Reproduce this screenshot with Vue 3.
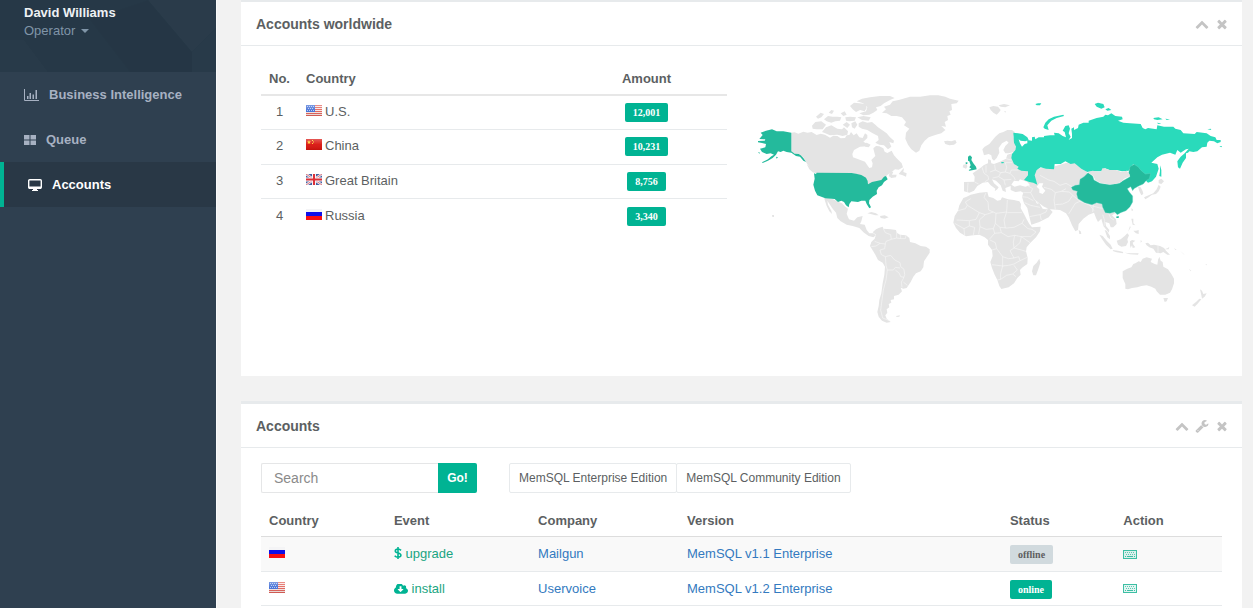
<script setup>
import { ref } from 'vue'

const query = ref('')

const totals = [
  { no: 1, flag: 'us', country: 'U.S.', amount: '12,001' },
  { no: 2, flag: 'cn', country: 'China', amount: '10,231' },
  { no: 3, flag: 'gb', country: 'Great Britain', amount: '8,756' },
  { no: 4, flag: 'ru', country: 'Russia', amount: '3,340' },
]

const accounts = [
  { flag: 'ru', event: 'upgrade', company: 'Mailgun', version: 'MemSQL v1.1 Enterprise', status: 'offline' },
  { flag: 'us', event: 'install', company: 'Uservoice', version: 'MemSQL v1.2 Enterprise', status: 'online' },
]
</script>

<template>
  <svg class="defs" aria-hidden="true">
    <defs>
      <linearGradient id="shine" x1="0" y1="0" x2="0" y2="1">
        <stop offset="0" stop-color="#fff" stop-opacity=".3" />
        <stop offset=".5" stop-color="#fff" stop-opacity=".05" />
        <stop offset="1" stop-color="#000" stop-opacity=".1" />
      </linearGradient>
      <symbol id="flag-us" viewBox="0 0 16 11">
        <path fill="#f8e6e4" d="M0 0h16v11H0z" />
        <path stroke="#e2625a" d="M0 .5h16M0 2.5h16M0 4.5h16M0 6.500h16M0 8.500h16M0 10.500h16" />
        <path fill="#4470d6" d="M0 0h9v7H0z" />
        <path stroke="#b9c9f2" stroke-dasharray="1 1" d="M1 1.500h7M2 3.500h6M1 5.500h7" />
        <path fill="url(#shine)" d="M0 0h16v11H0z" />
      </symbol>
      <symbol id="flag-cn" viewBox="0 0 16 11">
        <path fill="#d9130d" d="M0 0h16v11H0z" />
        <path fill="#ffd52e" d="M3 1l.6 1.400 1.400.1-1.100 1 .4 1.500L3 4.200 1.700 5l.4-1.500L1 2.500l1.400-.1zM6 1h1v1H6zM7 2.500h1v1H7zM6 4h1v1H6z" />
        <path fill="url(#shine)" d="M0 0h16v11H0z" />
      </symbol>
      <symbol id="flag-gb" viewBox="0 0 16 11">
        <path fill="#45609f" d="M0 0h16v11H0z" />
        <path stroke="#eceff8" stroke-width="2.400" d="M0 0l16 11M16 0L0 11" />
        <path stroke="#d9565c" stroke-width=".8" d="M0 0l16 11M16 0L0 11" />
        <path stroke="#f6f4f8" stroke-width="4" d="M8 0v11M0 5.500h16" />
        <path stroke="#dc3038" stroke-width="2" d="M8 0v11M0 5.500h16" />
      </symbol>
      <symbol id="flag-ru" viewBox="0 0 16 11">
        <path fill="#f4f4f6" d="M0 0h16v4H0z" />
        <path fill="#1010e8" d="M0 3h16v4H0z" />
        <path fill="#fa1010" d="M0 7h16v4H0z" />
      </symbol>
      <symbol id="i-up" viewBox="0 0 1792 1792">
        <path fill="currentColor" d="M1683 1331l-166 165q-19 19-45 19t-45-19l-531-531-531 531q-19 19-45 19t-45-19l-166-165q-19-19-19-45.500t19-45.500l742-741q19-19 45-19t45 19l742 741q19 19 19 45.500t-19 45.500z" />
      </symbol>
      <symbol id="i-wrench" viewBox="0 0 1792 1792">
        <path fill="currentColor" d="M448 1472q0-26-19-45t-45-19-45 19-19 45 19 45 45 19 45-19 19-45zm644-420l-682 682q-37 37-90 37-52 0-91-37l-106-108q-38-36-38-90 0-53 38-91l681-681q39 98 114.500 173.500t173.500 114.500zm634-435q0 39-23 106-47 134-164.500 217.500t-258.500 83.500q-185 0-316.500-131.500t-131.500-316.500 131.500-316.500 316.500-131.500q58 0 121.500 16.500t107.500 46.500q16 11 16 28t-16 28l-293 169v224l193 107q5-3 79-48.500t135.500-81 70.500-35.500q15 0 23.500 10t8.500 25z" />
      </symbol>
      <symbol id="i-times" viewBox="0 0 1792 1792">
        <path fill="currentColor" d="M1490 1322q0 40-28 68l-136 136q-28 28-68 28t-68-28l-294-294-294 294q-28 28-68 28t-68-28l-136-136q-28-28-28-68t28-68l294-294-294-294q-28-28-28-68t28-68l136-136q28-28 68-28t68 28l294 294 294-294q28-28 68-28t68 28l136 136q28 28 28 68t-28 68l-294 294 294 294q28 28 28 68z" />
      </symbol>
    </defs>
  </svg>

  <div class="page">
    <aside class="sidebar">
      <header class="profile">
        <svg class="facets" viewBox="0 0 216 72" preserveAspectRatio="none" aria-hidden="true">
          <path fill="#fff" opacity=".02" d="M148 0l44 52L216 28V0z" />
          <path fill="#fff" opacity=".012" d="M192 52l24-24v44h-24z" />
          <path fill="#000" opacity=".02" d="M148 0l44 52v20h-62L90 20z" />
          <path fill="#fff" opacity=".012" d="M0 40l24 0 24 32H0z" />
        </svg>
        <strong class="name">David Williams</strong>
        <button class="role" type="button">Operator <span class="caret"></span></button>
      </header>
      <nav class="menu">
        <a href="#bi">
          <svg width="15" height="12" viewBox="0 0 15 12" aria-hidden="true">
            <path fill="none" stroke="currentColor" d="M.5 0v11.500H15" />
            <path fill="currentColor" d="M3 7h1.500v3H3zM5.500 4H7v6H5.500zM8.500 5.500H10V10H8.500zM11.500 1H13v9h-1.500z" />
          </svg>
          Business Intelligence
        </a>
        <a href="#queue">
          <svg width="12" height="12" viewBox="0 0 12 12" aria-hidden="true">
            <path fill="currentColor" d="M0 1h5.500v4.500H0zM6.500 1H12v4.500H6.500zM0 6.500h5.500V11H0zM6.500 6.500H12V11H6.500z" />
          </svg>
          Queue
        </a>
        <a href="#accounts" class="active" aria-current="page">
          <svg width="14" height="12" viewBox="0 0 14 12" aria-hidden="true">
            <rect x=".7" y=".7" width="12.600" height="8.600" rx="1" fill="none" stroke="currentColor" stroke-width="1.400" />
            <path fill="currentColor" d="M1 7.500h12V10H9v1h1v1H4v-1h1v-1H1z" />
          </svg>
          Accounts
        </a>
      </nav>
    </aside>

    <main class="main">
      <section class="panel first">
        <header class="panel-head">
          <h2>Accounts worldwide</h2>
          <div class="tools">
            <button type="button" aria-label="Collapse"><svg><use href="#i-up" /></svg></button>
            <button type="button" aria-label="Close"><svg><use href="#i-times" /></svg></button>
          </div>
        </header>
        <div class="world">
          <div>
            <table class="totals">
              <colgroup><col class="t-no" /><col /><col class="t-amount" /></colgroup>
              <thead>
                <tr><th class="mid">No.</th><th>Country</th><th class="mid">Amount</th></tr>
              </thead>
              <tbody>
                <tr v-for="row in totals" :key="row.no">
                  <td class="mid">{{ row.no }}</td>
                  <td><svg class="flag" role="img" :aria-label="row.flag"><use :href="'#flag-' + row.flag" /></svg>{{ row.country }}</td>
                  <td class="mid"><span class="badge green">{{ row.amount }}</span></td>
                </tr>
              </tbody>
            </table>
          </div>

          <svg class="map" viewBox="0 0 1401 720" role="img" aria-label="World map of accounts">
            <!-- North America -->
            <g class="land" transform="translate(-21 -30)">
              <path d="M124 158L134 157 145 161 160 155 172 158 185 156 200 165 212 161 225 164 240 173 250 167 262 168 272 175 285 174 290 166 298 165 303 156 311 166 320 160 328 172 338 174 345 160 352 165 352 174 340 185 354 193 352 199 330 200 312 210 307 222 309 232 325 238 345 245 352 256 358 264 366 262 368 250 364 240 376 228 372 214 370 205 378 198 388 199 400 205 404 215 412 219 425 212 432 226 440 235 455 250 459 262 446 269 435 268 425 276 412 285 400 298 385 308 355 312 350 297 335 287 315 282 305 279 195 279 185 270 178 260 170 250 160 232 150 226 136 222 124 215z" />
              <path d="M416 288L420 276 430 275 426 284 440 284 438 292 424 294zM446 282L456 270 462 264 460 276 470 280 468 290 458 286z" />
              <path d="M186 137L196 126 214 124 228 134 218 148 200 148 188 146zM216 156L228 142 244 136 262 146 276 148 282 142 294 154 292 164 278 168 262 164 240 166 226 160zM198 110L212 98 222 102 214 112 204 116zM222 118L234 108 248 110 262 110 274 112 270 122 256 124 244 128 230 124zM236 98L244 90 252 92 246 102zM272 100L284 94 290 104 280 108zM286 112L300 110 318 112 314 122 298 124 288 122zM278 134L290 126 300 134 292 144zM304 130L316 124 322 134 314 146 306 142zM322 112L340 108 362 112 356 122 336 120zM300 78L312 68 328 70 346 72 350 84 344 94 330 90 318 96 308 88zM320 64L336 56 360 52 390 48 420 48 434 54 420 60 402 70 392 78 378 82 382 90 370 98 358 104 340 106 328 100 348 94 352 82 340 70zM326 130L338 124 352 128 366 126 376 134 384 142 396 150 410 160 420 172 432 182 430 190 418 186 424 200 414 208 402 196 388 194 376 188 386 180 384 168 368 160 352 150 336 146 326 140zM340 192L350 188 362 194 356 202 346 200zM170 252L182 262 194 276 190 278 178 268z" />
              <path d="M396 98L408 88 402 80 420 74 428 64 446 60 480 50 510 50 540 46 565 46 586 50 600 56 626 62 620 70 604 72 606 90 598 94 602 104 592 108 594 120 584 126 588 140 574 138 586 150 574 160 558 164 536 172 524 182 514 196 508 212 498 218 484 208 474 194 466 176 468 158 478 146 462 136 468 126 456 112 440 108 424 108 410 100z" />
              <path d="M222 353L236 354 250 358 264 365 276 370 286 380 294 386 290 402 297 418 312 422 322 412 338 408 334 424 330 432 344 434 350 450 358 460 370 460 378 466 370 472 356 468 342 458 328 444 308 438 290 434 272 424 262 414 258 398 248 386 240 374 232 362 234 374 244 392 246 402 238 394 230 378 226 366z" />
              <path d="M352 400L364 396 378 400 386 406 376 406 362 402zM390 408L404 406 416 412 404 416 392 414z" />
              <path d="M66 405L72 405 72 411 67 411z" />
            </g>
            <g class="dark" transform="translate(-21 -30)">
              <path d="M28 177L38 165 32 158 48 152 66 148 80 154 100 154 124 158 124 214 134 221 146 222 152 226 160 234 168 246 160 242 150 230 138 228 124 218 110 216 100 212 92 216 84 214 78 224 68 234 54 242 38 249 36 247 54 238 64 229 72 224 62 220 50 222 36 216 30 206 46 202 48 192 36 189 24 187 24 183 44 182 46 178z" />
              <path d="M192 280L198 282 200 278 305 279 318 281 334 285 348 293 353 303 354 313 366 306 380 303 394 300 402 290 408 288 413 298 402 306 396 316 386 322 380 332 381 342 368 350 358 360 357 370 363 382 358 385 350 372 346 362 334 362 324 366 304 364 298 372 296 382 288 376 282 366 274 362 264 366 254 357 226 355 214 350 202 346 195 332 190 314 194 296z" />
              <path d="M24 216L30 218 28 221zM78 230L84 232 80 236z" />
            </g>
            <!-- South America -->
            <g class="land" transform="translate(279 330)">
              <path d="M68 97L78 88 86 84 98 80 100 86 122 88 138 90 140 98 150 104 168 106 178 114 180 126 196 130 212 138 228 140 239 148 239 158 230 172 222 184 220 202 212 214 198 220 190 230 182 246 170 264 160 266 152 263 156 274 146 284 132 288 132 298 122 300 124 308 116 312 118 322 110 328 112 338 106 346 110 356 122 366 110 368 96 362 86 350 82 336 86 318 88 300 94 280 98 250 103 224 105 200 98 188 84 180 76 164 66 148 60 138 64 126 74 116 78 104z" />
              <path d="M138 348L150 346 148 350 140 351zM30 78L36 74 44 84 36 84z" />
              <path class="seam" d="M100 86L106 98 122 104 124 118 108 124 106 132 90 130 74 124M106 132L104 146 90 150 94 164 106 170 122 166 134 180 150 188 152 200 162 208 164 224 160 236 154 246 156 262M106 170L108 196 112 210 130 210 136 202 150 204M136 210L148 220 152 230 162 232M112 210L108 240 100 270 96 300 92 330 98 354 118 362M124 118L140 114 140 98M140 114L152 116 152 104M152 116L166 116 168 106M64 140L78 138 90 130M160 246L172 256" />
            </g>
            <!-- Atlantic islands and Scandinavia -->
            <g class="land" transform="translate(549 0)">
              <path d="M12 154L22 152 34 154 46 150 50 158 42 164 28 166 16 162zM148 52L160 48 174 50 182 60 178 66 170 74 160 68 152 60zM176 46L192 42 210 46 196 52 182 50zM192 64L198 64 196 68zM68 232L70 224 80 222 82 230 78 236z" />
              <path d="M127 178L134 170 148 162 158 150 166 140 178 130 190 126 202 120 216 120 224 126 220 140 226 160 228 174 222 186 206 190 196 190 190 180 196 168 206 158 200 152 186 160 176 174 178 188 170 204 162 212 156 206 154 196 146 192 132 196z" />
            </g>
            <!-- Eurasian mainland -->
            <g transform="translate(549 0)">
              <path class="land" d="M216 190L202 194 198 206 178 216 162 222 154 220 152 210 144 208 144 220 132 225 118 236 98 250 104 260 103 275 72 276 72 304 88 308 102 302 112 288 128 278 144 276 152 286 166 296 164 304 172 298 176 292 162 280 156 268 168 272 182 286 188 302 198 306 196 294 212 288 212 300 226 306 242 304 250 308 246 320 252 340 262 354 268 380 274 404 298 396 326 382 338 366 326 354 316 358 308 356 298 340 312 350 330 358 360 360 378 370 386 382 396 406 406 424 414 420 416 402 430 386 446 374 462 368 468 384 474 396 484 386 490 408 500 420 506 428 508 420 498 408 496 396 508 400 512 412 520 412 530 402 528 388 516 376 528 368 480 320 440 245 400 212 340 230 290 236 230 200z" />
              <path class="sea" d="M214 284L222 272 236 274 240 268 252 272 262 276 270 286 256 290 240 286 224 290zM290 290L298 280 310 280 306 290 316 302 308 312 298 308 298 298zM286 330L296 342 290 340z" />
              <path class="seam" d="M104 276L116 282M84 278L82 306M126 232L132 250 144 258 146 268 134 276M138 226L138 248M164 224L166 240 150 246M166 240L182 248 196 246 200 232 196 218M182 248L176 260 158 264M196 246L210 250 222 262M176 260L192 270 196 286M210 250L214 240 236 240M192 270L214 268M222 262L226 270M198 206L214 210M196 218L216 218M250 308L272 308 278 296 262 286M272 308L284 330 298 340M246 320L262 322 280 332M254 338L272 346 300 352M300 374L318 366 322 356M268 380L288 376 300 374 304 390M300 256L326 270 342 274 360 286 378 280 396 290M312 292L334 298 346 308 364 304 378 296M346 308L342 330 346 358M364 304L388 306 398 316 386 334 368 342 346 344M398 316L420 334 450 346 480 354 508 354M420 334L406 340 396 356 386 372M450 346L462 362" />
            </g>
            <!-- Africa -->
            <g class="land" transform="translate(549 270)">
              <path d="M70 54L80 50 92 44 118 38 142 36 146 50 160 54 172 62 182 60 186 52 204 58 222 60 238 64 243 72 242 84 252 102 260 118 268 132 276 142 302 140 300 154 288 172 270 190 260 202 258 214 263 234 262 252 248 262 240 270 242 284 232 294 222 310 206 322 184 327 178 318 172 300 164 284 156 264 151 246 158 228 156 210 144 194 144 180 134 172 118 164 100 166 78 169 60 158 48 144 40 128 44 108 54 92 58 76z" />
              <path d="M298 236L301 248 294 270 288 286 280 286 276 274 280 258 290 248zM416 150L422 154 424 162 418 162z" />
              <path class="seam" d="M54 92L76 86 82 76 118 98 136 104 160 96 168 100 200 96 202 60M82 76L76 66 92 56M118 98L108 118 88 122 50 120M138 38L132 52 144 66 146 90 160 96M202 98L246 98M168 100L166 130 160 146 138 148 120 140 118 120 136 104M120 140L116 162M100 166L104 142 88 138 72 146 44 130M72 146L74 168M88 122L88 138M166 130L180 142 200 144 222 142 246 130 252 118M200 96L192 120 196 144M160 146L164 160 148 178M164 160L184 158 204 170 224 166 244 170 270 188M246 130L264 146 276 148 288 156 272 170 244 170M224 166L220 186 222 204 210 212 222 234 206 236 188 230 170 206 156 210M150 180L166 188 170 206M156 254L188 258 206 256 222 252 240 242 262 232M188 230L188 258 182 280 182 298 172 300M182 298L200 286 218 282 232 270 222 256M218 282L228 290M222 204L240 188 244 170M222 204L258 214M222 234L236 230 240 242M184 158L180 142" />
            </g>
            <!-- South-east Asia, Oceania -->
            <g class="land" transform="translate(969 330)">
              <path d="M58 104L68 108 80 122 92 134 98 146 92 148 78 134 68 120zM74 90L80 92 90 108 90 118 82 112zM98 150L114 152 130 156 128 160 110 157 100 154zM134 158L152 160 176 160 174 164 150 163zM110 122L122 118 134 108 142 100 147 106 142 118 144 126 138 138 124 140 114 134zM150 124L156 120 166 122 158 128 160 134 166 142 158 144 156 136 152 144 150 136zM154 56L160 56 160 70 166 76 158 74zM160 92L168 92 176 90 176 102 168 100zM150 78L152 82 144 96zM182 120L186 124 182 128zM196 130L204 128 212 136 222 134 240 138 252 144 258 152 270 164 262 164 250 156 242 160 228 158 220 146 208 142 200 136zM254 148L264 144 268 140 266 148zM154 30L158 26 158 34z" />
              <path d="M128 214L142 206 154 202 160 192 166 190 176 184 182 186 188 176 200 172 216 176 212 186 224 192 232 194 234 180 238 170 242 182 248 186 250 200 264 208 274 222 282 236 282 250 276 268 270 278 256 284 240 284 230 274 226 266 214 260 200 256 184 258 172 262 156 264 144 268 136 266 136 252 128 234zM250 294L264 294 260 304 254 306zM360 268L366 272 370 282 380 280 374 290 366 296 364 286zM336 316L348 306 358 296 364 298 352 312 344 320zM326 206L334 212 332 214zM282 144L290 150 286 150zM300 152L314 164 310 162zM376 194L380 192 380 196z" />
              <path class="seam" d="M234 136L234 160M68 44L74 62 72 78M86 40L92 54 102 60M40 14L38 36" />
            </g>
            <g class="land" transform="translate(969 0)">
              <path d="M174 290L182 292 188 304 190 312 184 316 178 304zM236 270L244 266 252 274 244 282 236 280zM236 284L242 290 236 304 228 312 216 314 206 322 196 328 192 322 206 316 220 310 230 298zM154 354L158 358 156 364z" />
            </g>
            <!-- Russia -->
            <g class="bright" transform="translate(549 0)">
              <path d="M220 128L234 130 248 132 262 142 266 150 256 154 242 152 236 148 240 160 246 170 254 162 262 160 262 150 276 152 276 142 284 140 286 148 296 142 312 142 312 138 330 136 344 136 342 128 356 130 368 138 378 142 374 126 368 122 376 108 386 106 390 116 386 130 392 140 386 150 396 144 396 132 394 116 402 112 402 120 414 114 416 104 430 98 446 98 446 92 470 84 490 80 496 74 504 76 514 70 526 78 546 80 548 88 534 92 550 98 570 100 602 102 608 114 616 118 624 114 650 118 652 106 672 110 700 110 706 116 722 120 730 130 764 132 770 126 800 130 812 138 826 142 830 150 842 150 842 156 832 160 822 154 808 152 802 158 800 170 786 172 772 184 760 186 748 184 744 188 738 190 738 204 728 218 720 236 714 232 712 214 722 200 734 190 746 176 738 178 722 188 712 180 706 194 690 188 666 194 652 202 634 218 652 222 656 236 648 260 636 274 624 278 600 254 580 222 566 242 546 244 530 240 508 240 494 234 488 244 460 244 442 246 424 236 404 220 392 222 376 214 362 222 344 222 342 238 318 236 302 232 290 240 284 256 288 270 292 284 280 278 268 276 252 270 264 256 264 244 244 242 232 236 236 230 222 222 214 204 216 192 226 180 228 170 222 158z" />
              <path d="M310 112L316 98 326 88 342 80 370 74 372 78 350 84 334 92 322 106 326 120 314 116zM286 42L294 40 304 40 300 46 290 46zM464 42L474 38 490 42 494 52 484 56 470 50zM496 58L506 54 514 60 502 62zM640 84L656 82 668 88 652 90 642 88zM676 86L690 88 680 90zM650 98L664 100 656 102zM802 118L812 116 814 120zM838 168L846 168 844 172zM660 226L664 240 664 260 658 258 660 244zM184 216L192 216 190 220 184 220z" />
            </g>
            <!-- Mongolia, China, Great Britain -->
            <g transform="translate(969 0)">
              <path class="dark outline" d="M-26 292L-14 286 -2 284 0 268 12 260 24 248 38 258 42 270 60 280 90 284 118 280 126 274 150 260 146 248 150 230 162 223 174 230 184 242 196 252 212 250 208 266 198 272 190 282 176 288 162 296 158 302 152 290 142 296 148 306 158 318 158 336 150 350 138 362 122 368 112 374 104 366 90 370 76 368 68 352 66 342 50 338 36 344 14 338 -6 326 -10 312 -8 304 -22 300z" />
              <path class="dark" d="M108 380L116 378 116 384 110 384z" />
              <path class="land" d="M22 246L38 242 62 246 68 234 90 240 108 240 124 246 140 242 148 252 150 258 132 266 124 276 106 282 86 283 62 279 46 270 40 258z" />
            </g>
            <g class="dark" transform="translate(549 0)">
              <path d="M84 200L90 196 96 202 94 210 100 220 108 230 110 238 100 240 88 242 86 240 94 236 88 232 92 226 88 214 84 212zM76 218L82 216 82 222 78 222z" />
            </g>
          </svg>
        </div>
      </section>

      <section class="panel second">
        <header class="panel-head">
          <h2>Accounts</h2>
          <div class="tools">
            <button type="button" aria-label="Collapse"><svg><use href="#i-up" /></svg></button>
            <button type="button" aria-label="Settings"><svg><use href="#i-wrench" /></svg></button>
            <button type="button" aria-label="Close"><svg><use href="#i-times" /></svg></button>
          </div>
        </header>
        <div class="list">
          <div class="toolbar">
            <form class="search" @submit.prevent>
              <input v-model="query" type="text" placeholder="Search" aria-label="Search" />
              <button type="submit">Go!</button>
            </form>
            <div class="editions">
              <button type="button">MemSQL Enterprise Edition</button>
              <button type="button">MemSQL Community Edition</button>
            </div>
          </div>
          <table class="accounts">
            <colgroup>
              <col class="c-country" /><col class="c-event" /><col class="c-company" />
              <col class="c-version" /><col class="c-status" /><col />
            </colgroup>
            <thead>
              <tr><th>Country</th><th>Event</th><th>Company</th><th>Version</th><th>Status</th><th>Action</th></tr>
            </thead>
            <tbody>
              <tr v-for="row in accounts" :key="row.company">
                <td><svg class="flag" role="img" :aria-label="row.flag"><use :href="'#flag-' + row.flag" /></svg></td>
                <td class="event">
                  <svg v-if="row.event === 'upgrade'" width="8" height="12" viewBox="0 0 8 12" aria-hidden="true">
                    <path fill="none" stroke="currentColor" stroke-width="1.600" d="M4 0v12M7 3.400C6.200 2.500 5.200 2 4 2 2.400 2 1.300 2.800 1.300 4c0 2.800 5.600 1.300 5.600 4.200C6.900 9.400 5.700 10.200 4 10.200c-1.300 0-2.500-.5-3.300-1.500" />
                  </svg>
                  <svg v-else width="14" height="10" viewBox="-64 256 1920 1280" aria-hidden="true">
                    <path fill="currentColor" d="M1216 928q0-14-9-23t-23-9h-224v-352q0-13-9.500-22.500t-22.500-9.500h-192q-13 0-22.500 9.500t-9.500 22.500v352h-224q-13 0-22.500 9.500t-9.500 22.500q0 14 9 23l352 352q9 9 23 9t23-9l351-351q10-12 10-24zm640 224q0 159-112.500 271.500t-271.500 112.500h-1088q-185 0-316.500-131.500t-131.500-316.500q0-130 70-240t188-165q-2-30-2-43 0-212 150-362t362-150q156 0 285.500 87t188.500 231q71-62 166-62 106 0 181 75t75 181q0 76-41 138 130 31 213.500 135.500t83.500 238.500z" />
                  </svg>
                  {{ row.event }}
                </td>
                <td><a href="#company">{{ row.company }}</a></td>
                <td><a href="#version">{{ row.version }}</a></td>
                <td><span class="badge" :class="row.status === 'online' ? 'green' : 'grey'">{{ row.status }}</span></td>
                <td>
                  <button class="action" type="button" aria-label="Open console">
                    <svg width="14" height="9" viewBox="0 0 14 9" aria-hidden="true">
                      <rect x=".5" y=".5" width="13" height="8" fill="currentColor" fill-opacity=".15" stroke="currentColor" />
                      <path stroke="currentColor" stroke-dasharray="1 1" opacity=".8" d="M2 2.500h10M3 4.500h9" />
                      <path stroke="currentColor" d="M2 6.500h1M4 6.500h6M11 6.500h1" />
                    </svg>
                  </button>
                </td>
              </tr>
            </tbody>
          </table>
        </div>
      </section>
    </main>
  </div>
</template>

<style>
html,
body {
  background: #f2f2f2;
}
body {
  margin: 0;
  height: 100vh;
  overflow: hidden;
}
</style>

<style scoped>
.defs {
  position: absolute;
  width: 0;
  height: 0;
}
.page {
  display: flex;
  min-height: 100vh;
  font: 13px/20px "Liberation Sans", Arial, sans-serif;
  color: #5c5f62;
}
button {
  font: inherit;
  color: inherit;
  border: 0;
  padding: 0;
  margin: 0;
  background: none;
  cursor: pointer;
}
a {
  color: #337ac0;
  text-decoration: none;
}

.sidebar {
  flex: 0 0 216px;
  background: #2f4050;
  border-right: 1px solid #fafafa;
}
.profile {
  position: relative;
  box-sizing: border-box;
  height: 72px;
  padding: 4px 24px;
  line-height: 18px;
  background: #263847;
}
.facets {
  position: absolute;
  inset: 0;
  width: 100%;
  height: 100%;
}
.name,
.role {
  position: relative;
  display: block;
}
.name {
  color: #eef1f4;
}
.role {
  color: #8095a8;
}
.caret {
  display: inline-block;
  margin-left: 2px;
  vertical-align: 2px;
  border-top: 4px solid;
  border-left: 4px solid transparent;
  border-right: 4px solid transparent;
}
.menu a {
  display: flex;
  align-items: center;
  gap: 10px;
  box-sizing: border-box;
  height: 45px;
  padding: 1px 0 0 24px;
  font-weight: bold;
  color: #a7b1c2;
}
.menu a.active {
  color: #fff;
  background: #293846;
  border-left: 4px solid #00b393;
}

.main {
  flex: 1;
  min-width: 0;
  padding: 0 11px 0 24px;
}
.panel {
  background: #fff;
  border-top: 3px solid #e7eaec;
}
.panel.first {
  border-top-width: 2px;
  margin-bottom: 25px;
}
.panel-head {
  display: flex;
  align-items: center;
  justify-content: space-between;
  height: 43px;
  padding: 0 13px 0 15px;
  border-bottom: 1px solid #e7eaec;
}
h2 {
  margin: 0;
  font-size: 14px;
  font-weight: bold;
}
.tools {
  display: flex;
  gap: 6px;
  color: #c4c4c4;
}
.tools svg {
  display: block;
  width: 14px;
  height: 14px;
}

.world {
  display: grid;
  grid-template-columns: 466fr 467fr;
  gap: 30px;
  padding: 15px 18px 46px 20px;
}
.map {
  display: block;
  width: 100%;
  margin-top: 29px;
}
.land {
  fill: #e4e4e4;
}
.sea {
  fill: #fff;
}
.seam {
  fill: none;
  stroke: #f6f6f6;
  stroke-width: 2;
}
.dark {
  fill: #24ba9c;
}
.outline {
  stroke: #6fdcc8;
  stroke-width: 1;
}
.bright {
  fill: #2adabb;
}

table {
  width: 100%;
  table-layout: fixed;
  border-collapse: separate;
  border-spacing: 0;
}
th,
td {
  box-sizing: border-box;
  padding: 0 8px;
  text-align: left;
  white-space: nowrap;
}
th {
  height: 34px;
  padding-top: 2px;
  border-bottom: 1px solid #ddd;
}
td {
  border-bottom: 1px solid #e7eaec;
}
.mid {
  text-align: center;
}
.t-no {
  width: 37px;
}
.t-amount {
  width: 161px;
}
.totals th {
  height: 35px;
  border-bottom: 2px solid #e7e7e7;
}
.totals td {
  height: 34px;
  padding-bottom: 2px;
}
.totals tr:nth-child(even) td {
  height: 35px;
}
.totals tr:last-child td {
  border-bottom: 0;
}
.accounts td {
  height: 35px;
}
.accounts tbody tr:nth-child(even) td {
  height: 34px;
}
.accounts tbody tr:nth-child(odd) {
  background: #f9f9f9;
}
.c-country {
  width: 13%;
}
.c-event {
  width: 15%;
}
.c-company {
  width: 15.5%;
}
.c-version {
  width: 33.6%;
}
.c-status {
  width: 11.8%;
}
.flag {
  width: 16px;
  height: 11px;
  margin-right: 3px;
}
.event {
  color: #1aa582;
}
.event svg {
  vertical-align: -1px;
  color: #00b393;
}
.badge {
  display: inline-block;
  height: 19px;
  padding: 0 8px;
  border-radius: 2px;
  vertical-align: middle;
  font: bold 10px/20px "Liberation Serif", "Times New Roman", serif;
}
.green {
  color: #fff;
  background: #00b393;
}
.grey {
  color: #5e5e5e;
  background: #d1dade;
}
.action {
  display: block;
  color: #3dbfa4;
}
.action svg {
  display: block;
}

.list {
  padding: 15px 20px;
}
.toolbar {
  display: flex;
  gap: 32px;
  margin-bottom: 10px;
}
.search {
  display: flex;
  width: 216px;
  height: 30px;
}
.search input {
  flex: 1;
  min-width: 0;
  box-sizing: border-box;
  padding: 0 12px;
  border: 1px solid #e5e6e7;
  border-right: 0;
  border-radius: 2px 0 0 2px;
  font: 14px "Liberation Sans", Arial, sans-serif;
  color: inherit;
}
.search input::placeholder {
  color: #8a8a8a;
}
.search button {
  width: 39px;
  border-radius: 0 2px 2px 0;
  font-size: 12px;
  font-weight: bold;
  color: #fff;
  background: #00b393;
}
.editions {
  display: flex;
}
.editions button {
  height: 30px;
  padding: 0 9px;
  border: 1px solid #e7eaec;
  border-radius: 2px;
  font-size: 12px;
}
.editions button + button {
  margin-left: -1px;
}
</style>
